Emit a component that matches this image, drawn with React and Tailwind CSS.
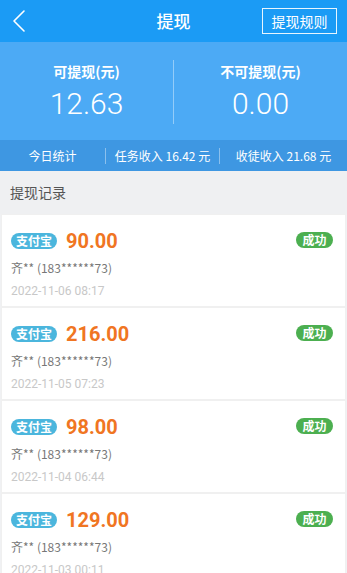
import React from "react";

const records = [
  { amount: "90.00", date: "2022-11-06 08:17" },
  { amount: "216.00", date: "2022-11-05 07:23" },
  { amount: "98.00", date: "2022-11-04 06:44" },
  { amount: "129.00", date: "2022-11-03 00:11" },
];

const cjk = { fontFamily: '"Noto Sans CJK SC", "Noto Sans", sans-serif' };
const num = { fontFamily: 'Roboto, "Noto Sans CJK SC", sans-serif' };

export default function App() {
  return (
    <div className="w-[347px] h-[573px] overflow-hidden bg-[#f0f1f3]" style={cjk}>
      {/* Header */}
      <div className="h-[42px] bg-[#1b9bf5] flex items-center relative">
        <div className="w-[42px] h-full flex items-center justify-center">
          <svg width="14" height="24" viewBox="0 0 14 24" className="ml-[-4px]">
            <path d="M12 2 L2 12 L12 22" fill="none" stroke="white" strokeWidth="1.6" strokeLinecap="round" strokeLinejoin="round" />
          </svg>
        </div>
        <div className="absolute left-0 right-0 text-center text-white text-[17px] font-medium pointer-events-none">提现</div>
        <div className="ml-auto mr-[10px] h-[26px] w-[75px] border border-white/90 flex items-center justify-center text-white text-[14px]">提现规则</div>
      </div>

      {/* Summary */}
      <div className="bg-[#4caaf5] h-[98px] flex items-center">
        <div className="flex-1 flex flex-col items-center">
          <div className="text-white text-[14px] font-bold leading-[20px]">可提现(元)</div>
          <div className="text-white text-[30px] font-light leading-[36px] mt-[5px]" style={num}>12.63</div>
        </div>
        <div className="w-px h-[64px] bg-white/40 mt-[2px]"></div>
        <div className="flex-1 flex flex-col items-center">
          <div className="text-white text-[14px] font-bold leading-[20px]">不可提现(元)</div>
          <div className="text-white text-[30px] font-light leading-[36px] mt-[5px]" style={num}>0.00</div>
        </div>
      </div>

      {/* Stats bar */}
      <div className="bg-[#3e97e2] h-[31px] flex items-center text-white text-[12px]">
        <div className="w-[105px] text-center">今日统计</div>
        <div className="w-px h-[16px] bg-white/40"></div>
        <div className="w-[113px] text-center">任务收入 16.42 元</div>
        <div className="w-px h-[16px] bg-white/40"></div>
        <div className="flex-1 text-center">收徒收入 21.68 元</div>
      </div>

      {/* Section title */}
      <div className="h-[43px] flex items-center px-[10px] text-[14px] text-[#555] bg-[#eff0f2]">提现记录</div>

      {/* Records */}
      <div className="flex flex-col">
        {records.map((r, i) => (
          <div key={i} className="h-[93px] bg-white border border-[#f0f0f0] mx-px px-[9px] pt-[14px] flex flex-col">
            <div className="flex items-center h-[24px]">
              <div className="h-[16px] px-[5px] rounded-full bg-[#4bb6dd] text-white text-[12px] font-bold leading-[16px] flex items-center">支付宝</div>
              <div className="ml-[9px] text-[#f07522] text-[20px] font-bold leading-[24px]" style={num}>{r.amount}</div>
              <div className="ml-auto mr-[3px] h-[16px] w-[37px] rounded-full bg-[#4caf50] text-white text-[12px] font-bold flex items-center justify-center mt-[-3px]">成功</div>
            </div>
            <div className="mt-[6px] text-[12px] text-[#777] leading-[17px]">齐** (183******73)</div>
            <div className="mt-[7px] text-[12px] text-[#c8c8c8] leading-[17px]" style={num}>{r.date}</div>
          </div>
        ))}
      </div>
    </div>
  );
}
